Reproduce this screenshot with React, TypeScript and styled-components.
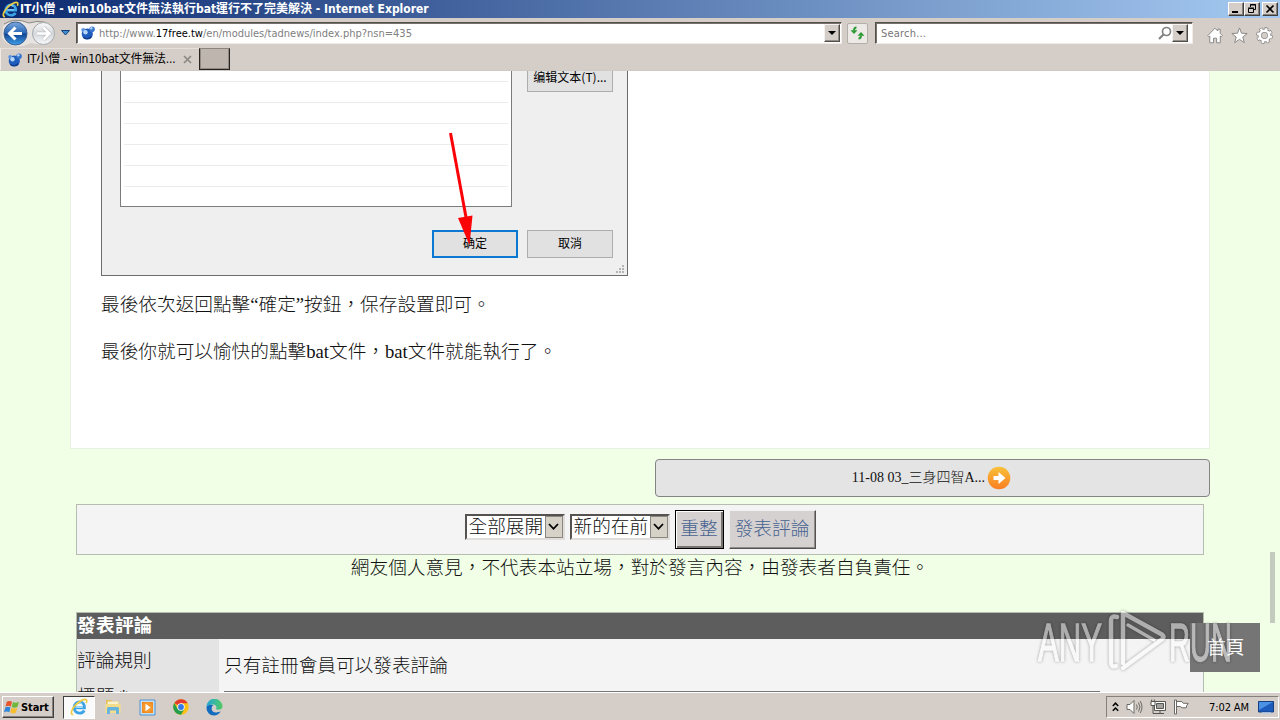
import React from 'react'
import styled, { createGlobalStyle } from 'styled-components'

const GlobalStyle = createGlobalStyle`
    * {
        box-sizing: border-box;
    }

    body {
        margin: 0;
        width: 1280px;
        height: 720px;
        overflow: hidden;
        font-family: 'DejaVu Sans Condensed', 'DejaVu Sans', 'Noto Sans CJK TC', sans-serif;
        font-size: 11px;
        color: #000;
    }

    svg {
        display: block;
        flex: none;
    }
`

//icons
const IeLogo = ({ size }: { size: number }) => (
    <svg width={size} height={size} viewBox="0 0 18 18" fill="none">
        <path d="M4.3 9.8h10.2c.2-3.4-1.7-5.8-5-5.8-3.2 0-5.4 2.4-5.4 5.6 0 3.3 2.2 5.5 5.4 5.5 2.2 0 3.8-.9 4.7-2.6" stroke="#3ba3e6" strokeWidth="2.8" />
        <path d="M5.6 9.4h7.2M6 5.800q3-2.300 6-.3" stroke="#a5e2fc" strokeWidth="1" />
        <path d="M3.2 16.500C.2 16.800.9 12 5.200 7.400 9.400 2.800 15 .4 16.400 2c.6.7.4 1.900-.2 3.100" stroke="#eccb45" strokeWidth="1.700" />
    </svg>
)

const SiteIcon = () => (
    <svg width="16" height="16" viewBox="0 0 16 16">
        <circle cx="7.300" cy="9" r="5.600" fill="#1f5cbc" />
        <circle cx="12" cy="4.200" r="2.800" fill="#3573cd" />
        <circle cx="3.300" cy="5" r="2.100" fill="#5d94dd" />
        <circle cx="5.500" cy="7.200" r="2.200" fill="#b5d4f6" />
        <circle cx="11.300" cy="3.300" r="1.200" fill="#b5d4f6" />
        <path d="M3.200 12.300c2.500 2 6.200 1.800 8.200-.8" stroke="#123a8a" strokeWidth="1.400" fill="none" />
    </svg>
)

const NavArrows = () => (
    <svg width="58" height="30" viewBox="0 0 58 30">
        <defs>
            <linearGradient id="back" x1="0" y1="0" x2="0" y2="1">
                <stop offset="0" stopColor="#7ba8dc" />
                <stop offset=".48" stopColor="#2a67b8" />
                <stop offset=".52" stopColor="#124493" />
                <stop offset="1" stopColor="#3fa2ec" />
            </linearGradient>
            <linearGradient id="forward" x1="0" y1="0" x2="0" y2="1">
                <stop offset="0" stopColor="#fbfbfb" />
                <stop offset=".5" stopColor="#d5d8dc" />
                <stop offset="1" stopColor="#f7f9fb" />
            </linearGradient>
        </defs>
        <path d="M3 8Q15-1 29 5q20-5 26 10-3 15-24 10-19 9-29-5z" fill="#e6e3e0" />
        <path d="M4 6Q15-1 29 5q17-5 25 6" stroke="#8b8985" fill="none" />
        <circle cx="15.500" cy="15.500" r="11.500" fill="url(#back)" stroke="#3c5e91" />
        <circle cx="43.500" cy="15.500" r="11" fill="url(#forward)" stroke="#a3a7ab" />
        <path d="M22 15.500H10M15.500 9.500l-6 6 6 6" stroke="#fff" strokeWidth="3" fill="none" />
        <path d="M37 15.500h12M43.500 9.500l6 6-6 6" stroke="#bbbfc4" strokeWidth="4" fill="none" />
        <path d="M37 15.500h12M43.500 9.500l6 6-6 6" stroke="#fff" strokeWidth="2.600" fill="none" />
    </svg>
)

const RefreshIcon = () => (
    <svg width="15" height="14" viewBox="0 0 15 14" fill="none" stroke="#2c9a35" strokeWidth="2">
        <path d="M6.500 1.500Q4 1.500 4 4.500" />
        <path d="M.5 4.200h7L4 8z" fill="#2c9a35" stroke="none" />
        <path d="M8.500 12.500Q11 12.500 11 9.500" />
        <path d="M7.500 9.800h7L11 6z" fill="#2c9a35" stroke="none" />
    </svg>
)

const SearchIcon = () => (
    <svg width="14" height="14" viewBox="0 0 14 14" fill="none" stroke="#828282">
        <circle cx="8.500" cy="5.500" r="4" strokeWidth="1.700" />
        <path d="M5.500 8.500L1 13" strokeWidth="2.200" />
    </svg>
)

const HomeIcon = () => (
    <svg width="16" height="17" viewBox="0 0 16 17" fill="#fff" stroke="#8b8987" strokeWidth="1">
        <path d="M.8 8.500L8 1.200l2.800 2.800V2.200h2.400v4.200l2.200 2.200-1.200 1.200-.9-.8v6.800H9.600v-4.600H6.500v4.600H2.800V9l-.9.800z" />
    </svg>
)

const StarIcon = () => (
    <svg width="17" height="17" viewBox="0 0 17 17" fill="#fff" stroke="#8b8987">
        <path d="M8.500.9l2 5.300 5.700.3-4.400 3.500 1.500 5.600-4.800-3.200-4.800 3.200 1.500-5.600L.8 6.500l5.700-.3z" />
    </svg>
)

const GearIcon = () => (
    <svg width="17" height="17" viewBox="0 0 17 17" fill="none">
        <circle cx="8.500" cy="8.500" r="6.900" stroke="#8b8987" strokeWidth="3" strokeDasharray="3.300 2.120" />
        <circle cx="8.500" cy="8.500" r="4.800" stroke="#8b8987" strokeWidth="4.200" />
        <circle cx="8.500" cy="8.500" r="6.600" stroke="#fff" strokeWidth="2" strokeDasharray="2.300 2.884" strokeDashoffset="-.5" />
        <circle cx="8.500" cy="8.500" r="4.700" stroke="#fff" strokeWidth="2.600" />
    </svg>
)

const DownArrow = () => (
    <svg width="8" height="4" viewBox="0 0 8 4">
        <path d="M0 0h8L4 4z" fill="#000" />
    </svg>
)

const Chevron = () => (
    <svg width="11" height="8" viewBox="0 0 11 8">
        <path d="M1 1l4.500 4.800L10 1" stroke="#000" strokeWidth="1.800" fill="none" />
    </svg>
)

const NextIcon = () => (
    <svg width="24" height="24" viewBox="0 0 24 24">
        <defs>
            <linearGradient id="next" x1="0" y1="0" x2="0" y2="1">
                <stop offset="0" stopColor="#f8c23a" />
                <stop offset="1" stopColor="#fa7d22" />
            </linearGradient>
        </defs>
        <circle cx="12" cy="12" r="11.300" fill="url(#next)" />
        <path d="M6.500 10v4h5v4l7-6-7-6v4z" fill="#fff" />
    </svg>
)

const WindowsFlag = () => (
    <svg width="16" height="16" viewBox="0 0 16 16">
        <path d="M2.800 2.800C4.600 1.500 6.300 1.700 8 2.700L6.800 7.500C5.200 6.600 3.400 6.400 1.500 7.600z" fill="#e8542b" />
        <path d="M8.900 3c1.900 1 3.800 1 6.100-.2l-1.400 4.900c-2 1.200-4 1.200-5.900.2z" fill="#6fb83a" />
        <path d="M1.300 8.500c1.800-1.200 3.600-1 5.200-.1l-1.200 4.800C3.600 12.200 1.900 12.100 0 13.300z" fill="#2f86d8" />
        <path d="M7.500 8.800c1.900 1 3.900 1 5.900-.1L12 13.500c-2 1.200-3.900 1.100-5.800.1z" fill="#f6bd2c" />
    </svg>
)

const FolderIcon = () => (
    <svg width="18" height="18" viewBox="0 0 18 18">
        <path d="M2 2h5l1.500 1.500H15V14H2z" fill="#e5bd59" />
        <path d="M3.500 3.500h11V9h-11z" fill="#f9f2cf" />
        <path d="M1.500 6h15v9h-15z" fill="#f4dc88" />
        <path d="M3 16V10.500q0-1.500 1.500-1.500h9q1.500 0 1.500 1.500V16h-3v-3.500H6V16z" fill="#67b4de" />
    </svg>
)

const MediaIcon = () => (
    <svg width="17" height="17" viewBox="0 0 17 17">
        <path d="M1 1h15v15H1z" fill="#c7dff4" stroke="#4a92d2" />
        <path d="M3 3h11v11H3z" fill="#f18a1b" />
        <circle cx="8.500" cy="8.500" r="5" fill="#f39b32" />
        <path d="M6.500 4.800v7.400l5-3.700z" fill="#fff" />
    </svg>
)

const ChromeIcon = () => (
    <svg width="16" height="16" viewBox="0 0 16 16">
        <circle cx="8" cy="8" r="7.700" fill="#fbc116" />
        <path d="M8 8L1.300 4.100A7.700 7.700 0 0 1 14.700 4.200H8z" fill="#e33b2e" />
        <path d="M8 8l3.300 2L8 15.700A7.700 7.700 0 0 1 1.300 4.100L4.700 10z" fill="#269e4b" />
        <circle cx="8" cy="8" r="3.700" fill="#fff" />
        <circle cx="8" cy="8" r="2.900" fill="#3579e8" />
    </svg>
)

const EdgeIcon = () => (
    <svg width="17" height="17" viewBox="0 0 17 17">
        <defs>
            <linearGradient id="edge" x1="0" y1="0" x2="1" y2="0">
                <stop offset="0" stopColor="#25a6d8" />
                <stop offset="1" stopColor="#50cb63" />
            </linearGradient>
        </defs>
        <path d="M.5 8A8 8 0 0 1 16.500 7.500c0 3.500-5.500 4-6.500 2.200 1.300-2.100-.3-4.300-3-4.300C4 5.400 1 6.500.5 8z" fill="url(#edge)" />
        <path d="M.5 8.500C1 5.800 5 5 7.500 6.200c-2.800 1-2.700 7.300 2.500 7.300 2 0 3.500-.5 4.800-1.200C12.900 15.400 10.600 16.500 8 16.500 3.800 16.500.5 13 .5 8.500z" fill="#126bbd" />
    </svg>
)

const TrayUp = () => (
    <svg width="7" height="10" viewBox="0 0 7 10" fill="none" stroke="#000" strokeWidth="1.500">
        <path d="M.8 4l2.700-2.800L6.200 4M.8 8.800L3.500 6l2.700 2.800" />
    </svg>
)

const SpeakerIcon = () => (
    <svg width="17" height="16" viewBox="0 0 17 16" fill="none" stroke="#6c6a67">
        <path d="M1 5.500h3l4-4v13l-4-4H1z" fill="#fff" />
        <path d="M10.500 5.500q1.500 2.500 0 5M12.500 3.500q3 4.500 0 9M14.200 2q3.600 6 0 12" />
    </svg>
)

const NetworkIcon = () => (
    <svg width="16" height="16" viewBox="0 0 16 16" fill="#fff" stroke="#565451">
        <path d="M4.500 2.500h11v9h-11z" />
        <path d="M6.500 4.500h7v5h-7z" fill="#a4a29f" />
        <path d="M6 14.500h8M10 12v2.500M3 7v7.500h3" fill="none" />
        <path d="M1 2.500h4v4H1zM1.700.5v2M4.300.5v2" />
    </svg>
)

const FlagIcon = () => (
    <svg width="17" height="16" viewBox="0 0 17 16" fill="#fff" stroke="#6c6a67">
        <path d="M3.500 2.500h5.300l1.500 1.800h4.900l-1.500 2.300-.5 2.200H9L7.500 7.500h-4z" />
        <path d="M1.500 1h2v14h-2z" />
    </svg>
)

const DesktopIcon = () => (
    <svg width="16" height="14" viewBox="0 0 16 14">
        <path d="M.5 1.500h15V12H.5z" fill="#1d5bbd" stroke="#163f80" />
        <path d="M1 2h14L1 10z" fill="#4c92e4" />
        <path d="M4 13h9" stroke="#b7cce9" strokeWidth="1.500" />
    </svg>
)

const favs = [<HomeIcon key="home" />, <StarIcon key="star" />, <GearIcon key="gear" />]
const quickLaunch = [<FolderIcon key="folder" />, <MediaIcon key="media" />, <ChromeIcon key="chrome" />, <EdgeIcon key="edge" />]
const listRows = [1, 2, 3, 4, 5, 6]

function App() {
    return (
        <Screen lang="zh-TW">
            <GlobalStyle />
            <TitleBar>
                <IeLogo size={17} />
                <Title>IT小僧 - win10bat文件無法執行bat運行不了完美解決 - Internet Explorer</Title>
                <WindowButton>
                    <svg width="12" height="10" viewBox="0 0 12 10">
                        <path d="M2 8h6" stroke="#000" strokeWidth="2" />
                    </svg>
                </WindowButton>
                <WindowButton>
                    <svg width="12" height="10" viewBox="0 0 12 10" fill="none" stroke="#000">
                        <path d="M4.500 3V.5h5v5H8M4 1h6M2.500 4.500h5v4h-5zM2 4h6" />
                    </svg>
                </WindowButton>
                <WindowButton $gap>
                    <svg width="12" height="10" viewBox="0 0 12 10">
                        <path d="M2.500 1.500l7 7M9.500 1.500l-7 7" stroke="#000" strokeWidth="1.700" />
                    </svg>
                </WindowButton>
            </TitleBar>

            <NavBar>
                <NavArrows />
                <History>
                    <svg width="9" height="6" viewBox="0 0 9 6">
                        <path d="M.5.500h8l-4 4.500z" fill="#3b8fd0" stroke="#123f78" />
                    </svg>
                </History>
                <Field $width={766}>
                    <SiteIcon />
                    <Url>
                        http://www.<b>17free.tw</b>/en/modules/tadnews/index.php?nsn=435
                    </Url>
                    <DropButton>
                        <DownArrow />
                    </DropButton>
                </Field>
                <Refresh>
                    <RefreshIcon />
                </Refresh>
                <Field $width={318} $search>
                    <Placeholder>Search...</Placeholder>
                    <SearchIcon />
                    <DropButton>
                        <DownArrow />
                    </DropButton>
                </Field>
                <Favs>{favs}</Favs>
            </NavBar>

            <TabBar>
                <Tab>
                    <SiteIcon />
                    <TabLabel>IT小僧 - win10bat文件無法...</TabLabel>
                    <svg width="9" height="9" viewBox="0 0 9 9">
                        <path d="M1 1l7 7M8 1L1 8" stroke="#8c8985" strokeWidth="1.700" />
                    </svg>
                </Tab>
                <NewTab />
            </TabBar>

            <Page>
                <Article>
                    <Dialog>
                        <ListRow>
                            <ListBox>
                                {listRows.map((row) => (
                                    <Line key={row} />
                                ))}
                            </ListBox>
                            <DialogButton $cut>编辑文本(T)...</DialogButton>
                        </ListRow>
                        <DialogActions>
                            <DialogButton $primary>确定</DialogButton>
                            <DialogButton>取消</DialogButton>
                        </DialogActions>
                        <Pointer width="30" height="114" viewBox="0 0 30 114">
                            <path d="M5.500 1L21.500 88" stroke="#fb0207" strokeWidth="3" />
                            <path d="M13 86l14.500-2.500L24.500 113z" fill="#fb0207" />
                        </Pointer>
                        <Grip width="9" height="9" viewBox="0 0 9 9" fill="#b4b4b4">
                            <path d="M6 0h2v2H6zM3 3h2v2H3zM6 3h2v2H6zM0 6h2v2H0zM3 6h2v2H3zM6 6h2v2H6z" />
                        </Grip>
                    </Dialog>
                    <Paragraph>最後依次返回點擊“確定”按鈕，保存設置即可。</Paragraph>
                    <Paragraph>最後你就可以愉快的點擊bat文件，bat文件就能執行了。</Paragraph>
                </Article>

                <NextPost>
                    <span>11-08 03_三身四智A...</span>
                    <NextIcon />
                </NextPost>

                <CommentBar>
                    <Select>
                        全部展開
                        <SelectArrow>
                            <Chevron />
                        </SelectArrow>
                    </Select>
                    <Select>
                        新的在前
                        <SelectArrow>
                            <Chevron />
                        </SelectArrow>
                    </Select>
                    <FormButton $width={49} $focused>
                        重整
                    </FormButton>
                    <FormButton $width={87}>發表評論</FormButton>
                </CommentBar>
                <Notice>網友個人意見，不代表本站立場，對於發言內容，由發表者自負責任。</Notice>

                <CommentForm>
                    <FormHead>發表評論</FormHead>
                    <FormRow>
                        <FormLabel>評論規則</FormLabel>
                        <FormCell>只有註冊會員可以發表評論</FormCell>
                    </FormRow>
                    <FormRow>
                        <FormLabel $tight>標題 *</FormLabel>
                        <FormCell>
                            <TitleInput />
                        </FormCell>
                    </FormRow>
                </CommentForm>

                <ScrollThumb />
                <HomeLink>首頁</HomeLink>
                <Watermark width="200" height="66" viewBox="0 0 200 66">
                    <g fill="#fff" stroke="#fff" strokeWidth="1.300" fontFamily="Liberation Sans Narrow, Liberation Sans, sans-serif" fontSize="54">
                        <text x="2" y="52" textLength="64" lengthAdjust="spacingAndGlyphs">
                            ANY
                        </text>
                        <text x="133" y="52" textLength="63" lengthAdjust="spacingAndGlyphs">
                            RUN
                        </text>
                    </g>
                    <g fill="none" stroke="#fff" strokeWidth="4.500" strokeLinejoin="round" strokeLinecap="round">
                        <path d="M81 8q-6-2-6 4v41q0 6 5 4" />
                        <path d="M87 54V4l38 21q5 3 0 6L87 59" />
                        <path d="M92 16l26 15" strokeWidth="3.500" />
                    </g>
                </Watermark>
            </Page>

            <TaskBar>
                <StartButton>
                    <WindowsFlag />
                    Start
                </StartButton>
                <ActiveTask>
                    <IeLogo size={18} />
                </ActiveTask>
                <QuickLaunch>{quickLaunch}</QuickLaunch>
                <Tray>
                    <TrayUp />
                    <SpeakerIcon />
                    <NetworkIcon />
                    <FlagIcon />
                    <Clock>7:02 AM</Clock>
                    <DesktopIcon />
                </Tray>
            </TaskBar>
        </Screen>
    )
}

export default App

const Screen = styled.div`
    display: flex;
    flex-direction: column;
    width: 1280px;
    height: 720px;
    overflow: hidden;
    background: #d5cec8;
`

//browser
const TitleBar = styled.div`
    display: flex;
    align-items: center;
    flex: none;
    height: 18px;
    padding: 0 2px 0 2px;
    background: linear-gradient(90deg, #0b2a70, #a5caf1);
`
const Title = styled.div`
    flex: 1;
    padding: 0 0 1px 1px;
    color: #fff;
    font-size: 12px;
    font-weight: bold;
    line-height: 16px;
    white-space: nowrap;
`
const WindowButton = styled.div<{ $gap?: boolean }>`
    display: flex;
    align-items: center;
    justify-content: center;
    width: 16px;
    height: 14px;
    margin-left: ${(props) => (props.$gap ? '2px' : '0')};
    background: #d5cec8;
    border: 1px solid;
    border-color: #fff #404040 #404040 #fff;
    box-shadow: inset -1px -1px #85807b;
`
const NavBar = styled.div`
    display: flex;
    align-items: center;
    flex: none;
    height: 30px;
`
const History = styled.div`
    width: 18px;
    padding-left: 3px;
`
const Field = styled.div<{ $width: number; $search?: boolean }>`
    display: flex;
    align-items: center;
    width: ${(props) => props.$width}px;
    height: 22px;
    padding: 0 ${(props) => (props.$search ? '4px' : '1px')} 0 3px;
    background: #fff;
    border: 1px solid;
    border-color: #55504c #eeebe8 #eeebe8 #55504c;
    box-shadow: inset 1px 1px #77716c;
`
const Url = styled.div`
    flex: 1;
    padding-left: 3px;
    color: #808080;
    white-space: nowrap;

    b {
        color: #000;
        font-weight: normal;
    }
`
const DropButton = styled.div`
    display: flex;
    align-items: center;
    justify-content: center;
    width: 16px;
    height: 18px;
    background: #d5cec8;
    border: 1px solid;
    border-color: #f4f2f0 #504c48 #504c48 #f4f2f0;
    box-shadow: inset -1px -1px #948e88;
`
const Refresh = styled.div`
    display: flex;
    align-items: center;
    justify-content: center;
    width: 21px;
    height: 21px;
    margin: 0 7px 0 5px;
    background: #ece9e6;
    border: 1px solid #b4afa9;
    border-radius: 2px;
`
const Placeholder = styled.div`
    flex: 1;
    padding-left: 2px;
    color: #777;
    letter-spacing: 0.2px;
`
const Favs = styled.div`
    display: flex;
    gap: 8px;
    padding: 4px 0 0 14px;
`
const TabBar = styled.div`
    display: flex;
    flex: none;
    height: 23px;
    border-bottom: 1px solid #d0cac4;
`
const Tab = styled.div`
    display: flex;
    align-items: center;
    width: 199px;
    padding-left: 6px;
    border-left: 1px solid #eeebe8;
    border-top: 1px solid #e4e0dc;
`
const TabLabel = styled.div`
    width: 160px;
    padding: 0 0 1px 4px;
    font-size: 12px;
    letter-spacing: -0.2px;
    line-height: 16px;
    white-space: nowrap;
`
const NewTab = styled.div`
    width: 31px;
    height: 22px;
    background: #beb5ae;
    border: 1px solid #26221f;
    border-top-color: #8b857f;
    box-shadow: inset 1px 0 #918a84, inset -1px -1px #918a84;
`

//page
const Page = styled.div`
    position: relative;
    display: flex;
    flex-direction: column;
    flex: none;
    height: 621px;
    padding: 0 70px;
    overflow: hidden;
    background: #f0ffe6;
    font-family: 'Liberation Serif', 'Noto Sans CJK TC', serif;
    font-size: 18.67px;
    font-weight: 300;
    color: #111;
`
const Article = styled.div`
    flex: none;
    height: 378px;
    padding: 0 30px;
    background: #fff;
    border: 1px solid #e9f2e2;
    border-top: 0;
`
const Dialog = styled.div`
    position: relative;
    display: flex;
    flex-direction: column;
    width: 527px;
    height: 205px;
    margin-bottom: 15px;
    background: #efefef;
    border: 1px solid #6d6d6d;
    border-top: 0;
    font-family: 'Noto Sans CJK SC', sans-serif;
    font-size: 12px;
`
const ListRow = styled.div`
    display: flex;
    gap: 15px;
    padding-left: 18px;
`
const ListBox = styled.div`
    width: 392px;
    height: 136px;
    padding: 0 3px;
    background: #fff;
    border: 1px solid #7b7b7b;
    border-top: 0;
`
const Line = styled.div`
    height: 21px;
    border-bottom: 1px solid #ececec;

    &:first-child {
        height: 11px;
    }
`
const DialogButton = styled.div<{ $primary?: boolean; $cut?: boolean }>`
    display: flex;
    align-items: center;
    justify-content: center;
    width: 86px;
    height: 28px;
    margin-top: ${(props) => (props.$cut ? '-7px' : '0')};
    padding-bottom: 3px;
    background: #e1e1e1;
    border: ${(props) => (props.$primary ? '2px solid #0b78d1' : '1px solid #adadad')};
    color: #000;
    font-weight: 400;
    white-space: nowrap;
`
const DialogActions = styled.div`
    display: flex;
    justify-content: flex-end;
    gap: 9px;
    padding: 23px 14px 0 0;
`
const Pointer = styled.svg`
    position: absolute;
    left: 343px;
    top: 61px;
`
const Grip = styled.svg`
    position: absolute;
    right: 2px;
    bottom: 1px;
`
const Paragraph = styled.p`
    margin: 0 0 20px;
    line-height: 27px;
    white-space: nowrap;
`
const NextPost = styled.div`
    display: flex;
    align-items: center;
    justify-content: center;
    gap: 2px;
    flex: none;
    align-self: flex-end;
    width: 555px;
    height: 38px;
    margin-top: 10px;
    padding: 0 2px 1px 0;
    background: #e4e4e4;
    border: 1px solid #848484;
    border-radius: 4px;
    font-size: 14px;

    span {
        padding-bottom: 4px;
    }
`
const CommentBar = styled.div`
    display: flex;
    align-items: center;
    justify-content: center;
    gap: 5px;
    flex: none;
    width: 1128px;
    height: 51px;
    margin: 7px 6px 0;
    background: #f4f4f4;
    border: 1px solid #b5bdaf;
`
const Select = styled.div`
    display: flex;
    align-items: center;
    justify-content: space-between;
    width: 100px;
    height: 26px;
    margin-bottom: 5px;
    padding-left: 2px;
    background: #fff;
    border: 2px solid;
    border-color: #55524f #e0ddda #e0ddda #55524f;
    line-height: 20px;
    white-space: nowrap;
`
const SelectArrow = styled.div`
    display: flex;
    align-items: center;
    justify-content: center;
    width: 18px;
    height: 22px;
    background: #d6d2c8;
    border: 1px solid #8a8781;
`
const FormButton = styled.div<{ $width: number; $focused?: boolean }>`
    display: flex;
    align-items: center;
    justify-content: center;
    width: ${(props) => props.$width}px;
    height: 39px;
    padding-bottom: 6px;
    background: #d5d1d1;
    border: 1px solid;
    border-color: ${(props) => (props.$focused ? '#000' : '#f2f0f0 #55524f #55524f #f2f0f0')};
    box-shadow: ${(props) => (props.$focused ? 'inset 1px 1px #fff, inset -2px -2px #77736f' : 'inset -1px -1px #8f8b88')};
    color: #47638f;
    white-space: nowrap;
`
const Notice = styled.div`
    flex: none;
    height: 57px;
    line-height: 26px;
    text-align: center;
    white-space: nowrap;
`
const CommentForm = styled.div`
    flex: none;
    width: 1128px;
    margin: 0 6px;
    background: #f4f4f4;
    border: 1px solid #b5bdaf;
`
const FormHead = styled.div`
    height: 26px;
    background: #5d5d5d;
    color: #fff;
    font-weight: bold;
    letter-spacing: 0.3px;
    line-height: 25px;
`
const FormRow = styled.div`
    display: flex;
    height: 45px;
`
const FormLabel = styled.div<{ $tight?: boolean }>`
    width: 142px;
    padding-top: ${(props) => (props.$tight ? '0' : '8px')};
    background: #e4e4e4;
    line-height: ${(props) => (props.$tight ? '26px' : '27px')};
`
const FormCell = styled.div`
    flex: 1;
    padding: 7px 5px;
    line-height: 40px;
`
const TitleInput = styled.div`
    width: 876px;
    height: 30px;
    background: #fff;
    border: 1px solid #777;
`
const ScrollThumb = styled.div`
    position: absolute;
    right: 5px;
    top: 481px;
    width: 5px;
    height: 71px;
    background: #c3cbbe;
`
const HomeLink = styled.div`
    position: absolute;
    left: 1190px;
    top: 552px;
    width: 70px;
    height: 49px;
    padding-left: 17px;
    background: #757575;
    color: #fff;
    font-weight: 400;
    line-height: 49px;
`
const Watermark = styled.svg`
    position: absolute;
    left: 1036px;
    top: 538px;
    opacity: 0.5;
    filter: drop-shadow(0 0 1.5px rgba(0, 0, 0, 0.7));
`

//taskbar
const TaskBar = styled.div`
    display: flex;
    align-items: center;
    flex: none;
    height: 28px;
    padding: 1px 1px 0 2px;
    border-top: 1px solid #fff;
    background: #d5cec8;
`
const StartButton = styled.div`
    display: flex;
    align-items: center;
    gap: 1px;
    width: 52px;
    height: 22px;
    padding-left: 1px;
    border: 1px solid;
    border-color: #fff #404040 #404040 #fff;
    box-shadow: inset -1px -1px #85807b;
    font-weight: bold;
    letter-spacing: -0.1px;
`
const ActiveTask = styled.div`
    display: flex;
    align-items: center;
    justify-content: center;
    width: 32px;
    height: 23px;
    margin-left: 9px;
    background: #fbfafa;
    border: 1px solid;
    border-color: #404040 #fff #fff #404040;
`
const QuickLaunch = styled.div`
    display: flex;
    align-items: center;
    gap: 17px;
    padding-left: 9px;
`
const Tray = styled.div`
    display: flex;
    align-items: center;
    gap: 7px;
    width: 173px;
    height: 22px;
    margin-left: auto;
    padding-left: 5px;
    border: 1px solid;
    border-color: #85807b #fff #fff #85807b;
`
const Clock = styled.div`
    width: 41px;
    margin: 0 1px 0 12px;
    letter-spacing: -0.1px;
    white-space: nowrap;
`
